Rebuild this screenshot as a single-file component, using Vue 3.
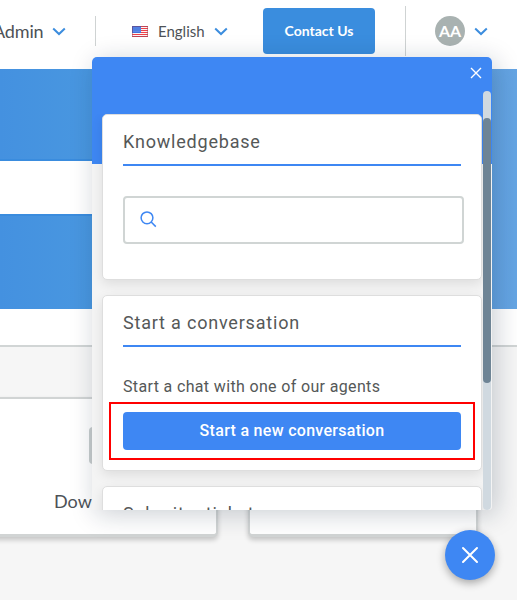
<script setup>
const stripes = [0, 2, 4, 6, 8, 10]
const stars = [1.5, 3.5, 5.5, 7.5]
</script>

<template>
  <div class="page">
    <header class="topbar">
      <div class="account">
        <span>Admin</span>
        <svg class="chevron" viewBox="0 0 14 9"><path d="M1.200 1.500 7 7l5.800-5.500" /></svg>
      </div>
      <i class="rule short"></i>
      <div class="language">
        <svg class="flag" viewBox="0 0 16 11">
          <rect width="16" height="11" fill="#fbf4f4" />
          <rect v-for="y in stripes" :key="y" y="0" width="16" height="1" fill="#ee4048" :transform="`translate(0 ${y})`" />
          <rect width="9" height="7" fill="#2a62d8" />
          <g fill="#c6d8ff">
            <template v-for="x in stars" :key="x">
              <rect :x="x" y="1.500" width="1" height="1" />
              <rect :x="x" y="3.500" width="1" height="1" />
              <rect :x="x" y="5.300" width="1" height="1" />
            </template>
          </g>
          <rect x=".5" y=".5" width="15" height="10" fill="none" stroke="#8d4861" stroke-opacity=".5" />
        </svg>
        <span>English</span>
        <svg class="chevron" viewBox="0 0 14 9"><path d="M1.200 1.500 7 7l5.800-5.500" /></svg>
      </div>
      <button class="contact">Contact Us</button>
      <i class="rule tall"></i>
      <div class="profile">
        <span class="avatar">AA</span>
        <svg class="chevron" viewBox="0 0 14 9"><path d="M1.200 1.500 7 7l5.800-5.500" /></svg>
      </div>
    </header>

    <section class="hero"><div class="hero-search"></div></section>
    <div class="band"></div>
    <main class="tiles">
      <article class="tile first">
        <i class="tile-icon"></i>
        <span class="tile-label">Downloads</span>
      </article>
      <article class="tile second"></article>
    </main>

    <aside class="widget">
      <div class="widget-head">
        <svg class="close" viewBox="0 0 12 12"><path d="M1 1l10 10M11 1 1 11" /></svg>
      </div>
      <div class="widget-body">
        <section class="card kb">
          <h2>Knowledgebase</h2>
          <div class="search">
            <svg viewBox="0 0 17 17"><circle cx="7" cy="6.800" r="5.900" /><path d="m11.200 11 4.600 4.600" /></svg>
          </div>
        </section>
        <section class="card chat">
          <h2>Start a conversation</h2>
          <p>Start a chat with one of our agents</p>
          <div class="highlight"><button class="start">Start a new conversation</button></div>
        </section>
        <section class="card ticket">
          <h2>Submit a ticket</h2>
        </section>
      </div>
      <div class="track"><div class="thumb"></div></div>
    </aside>

    <button class="fab"><svg viewBox="0 0 18 18"><path d="M2 2l14 14M16 2 2 16" /></svg></button>
  </div>
</template>

<style>
body {
  margin: 0;
  overflow: hidden;
}
</style>

<style scoped>
* {
  box-sizing: border-box;
}
.page {
  position: relative;
  width: 517px;
  height: 600px;
  overflow: hidden;
  background: #f6f6f6;
  font-family: Lato, sans-serif;
  color: #4d5257;
}
button {
  border: 0;
  padding: 0;
  color: #fff;
}
.topbar {
  display: flex;
  align-items: flex-start;
  height: 69px;
  background: #fff;
}
.account, .language, .profile {
  display: flex;
  align-items: center;
  height: 62px;
  flex: none;
}
.account {
  width: 102px;
  margin-left: -7px;
  font-size: 18px;
}
.account span {
  width: 59px;
  letter-spacing: -.15px;
}
.chevron {
  width: 14px;
  height: 9px;
  fill: none;
  stroke: #3c8dde;
  stroke-width: 2;
}
.rule {
  flex: none;
  width: 1px;
  background: #cfd3d3;
}
.short {
  height: 30px;
  margin-top: 16px;
}
.tall {
  height: 50px;
  margin-top: 6px;
}
.language {
  width: 167px;
  padding-left: 36px;
  font-size: 15px;
}
.flag {
  width: 16px;
  height: 11px;
  margin-right: 10px;
}
.language span {
  width: 56px;
  line-height: 18px;
}
.contact {
  flex: none;
  width: 112px;
  height: 46px;
  margin: 8px 30px 0 0;
  padding-bottom: 2px;
  border-radius: 4px;
  background: #3a8dde;
  font: 700 14px Lato, sans-serif;
}
.profile {
  padding-left: 29px;
  gap: 9px;
}
.avatar {
  display: grid;
  place-items: center;
  width: 30px;
  height: 30px;
  padding-bottom: 2px;
  border-radius: 50%;
  background: #a9b2b1;
  color: #fff;
  font: 700 16px Lato, sans-serif;
}
.hero {
  height: 240px;
  padding-top: 90px;
  background: linear-gradient(90deg, #4491e0 0, #4997e0 92px, #65a5e4 100%);
}
.hero-search {
  height: 57px;
  width: 420px;
  background: #fff;
  border: solid #3a8cde;
  border-width: 2px 0;
}
.band {
  height: 38px;
  background: #fff;
  border-bottom: 2px solid #d1d5d5;
}
.tiles {
  display: flex;
  gap: 30px;
  padding-top: 50px;
}
.tile {
  flex: none;
  height: 140px;
  background: #fff;
  border: 2px solid #d1d4d4;
  border-bottom-width: 3px;
  border-radius: 5px;
  box-shadow: 0 3px 5px #0003;
}
.first {
  width: 228px;
  margin-left: -10px;
  padding: 28px 0 0 62px;
}
.second {
  width: 230px;
}
.tile-icon {
  display: block;
  width: 40px;
  height: 37px;
  margin-left: 35px;
  border-radius: 4px;
  background: #c8cdcd;
}
.tile-label {
  display: block;
  margin-top: 26px;
  font-size: 18px;
  line-height: 22px;
}
.widget {
  position: absolute;
  left: 92px;
  top: 57px;
  width: 400px;
  height: 453px;
  border-radius: 5px 5px 4px 0;
  background: linear-gradient(#3e87f3 107px, #f4f4f4 107px);
  box-shadow: 4px 4px 26px #0c1e3538;
  font-family: Roboto, sans-serif;
  color: #555858;
}
.widget-head {
  display: flex;
  justify-content: flex-end;
  height: 57px;
  padding: 10px 10px 0 0;
}
.close {
  width: 12px;
  height: 12px;
  fill: none;
  stroke: #fff;
  stroke-width: 1.4;
}
.widget-body {
  display: flex;
  flex-direction: column;
  gap: 15px;
  height: 396px;
  padding: 0 10px;
  overflow: hidden;
}
.card {
  flex: none;
  padding: 0 20px;
  border: 1px solid #dedede;
  border-radius: 5px;
  background: #fff;
  box-shadow: 0 4px 12px #00000018;
}
.kb {
  height: 166px;
}
.chat {
  height: 176px;
}
.ticket {
  height: 100px;
}
h2 {
  height: 51px;
  margin: 0;
  padding-top: 16px;
  border-bottom: 2px solid #3e87f3;
  font-size: 18px;
  line-height: 22px;
  font-weight: 400;
  letter-spacing: .8px;
}
.search {
  width: 341px;
  height: 48px;
  margin-top: 30px;
  padding: 13px 15px;
  border: 2px solid #d0d5d4;
  border-radius: 4px;
}
.search svg {
  display: block;
  width: 17px;
  height: 17px;
  fill: none;
  stroke: #3e87f3;
  stroke-width: 1.5;
}
p {
  margin: 30px 0 5px;
  font-size: 16px;
  line-height: 20px;
  letter-spacing: .35px;
}
.highlight {
  width: 366px;
  height: 58px;
  margin: 0 -14px;
  padding: 8px 12px;
  border: 2px solid #f00;
}
.start {
  display: block;
  width: 338px;
  height: 38px;
  padding-bottom: 2px;
  border-radius: 4px;
  background: #3e87f3;
  font: 500 16px Roboto, sans-serif;
  letter-spacing: .3px;
}
.track {
  position: absolute;
  left: 391px;
  top: 34px;
  width: 8px;
  height: 419px;
  padding-top: 27px;
  border-radius: 4px;
  background: #d0d9e0;
}
.thumb {
  height: 265px;
  border-radius: 4px;
  background: #6e8495;
}
.fab {
  position: absolute;
  left: 445px;
  top: 530px;
  display: grid;
  place-items: center;
  width: 50px;
  height: 50px;
  border-radius: 50%;
  background: #3e87f3;
  box-shadow: 0 3px 8px #0005;
}
.fab svg {
  width: 18px;
  height: 18px;
  fill: none;
  stroke: #fff;
  stroke-width: 2;
  stroke-linecap: round;
}
</style>
